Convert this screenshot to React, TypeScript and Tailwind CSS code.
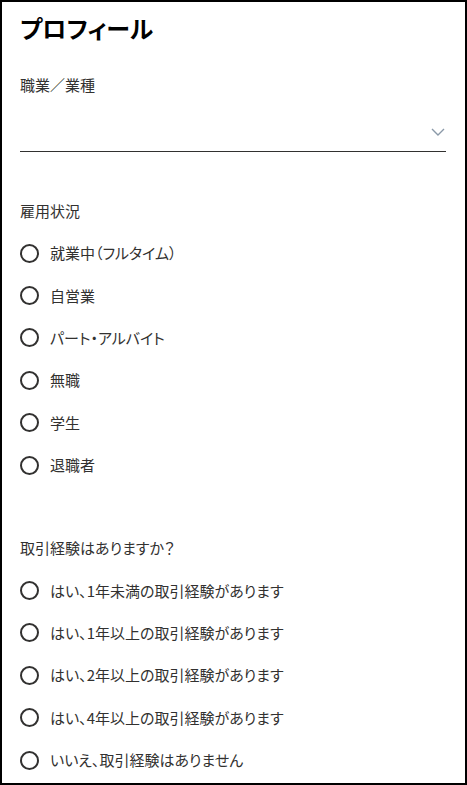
import React, { useState } from 'react';

const employment = ['就業中（フルタイム）', '自営業', 'パート・アルバイト', '無職', '学生', '退職者'];
const experience = [
  'はい、1年未満の取引経験があります',
  'はい、1年以上の取引経験があります',
  'はい、2年以上の取引経験があります',
  'はい、4年以上の取引経験があります',
  'いいえ、取引経験はありません',
];

function RadioGroup({ name, options }: { name: string; options: string[] }) {
  const [value, setValue] = useState<string | null>(null);
  return (
    <div className="flex flex-col">
      {options.map((opt) => (
        <label key={opt} className="h-[42.4px] flex items-center cursor-pointer" onClick={() => setValue(opt)}>
          <span className="w-[19px] h-[19px] rounded-full border-2 border-[#323130] flex items-center justify-center shrink-0">
            {value === opt && <span className="w-[9px] h-[9px] rounded-full bg-[#323130]" />}
          </span>
          <span className="ml-[11px] text-[15px] leading-[22px] text-[#323130]">{opt}</span>
          <input type="radio" name={name} className="hidden" readOnly checked={value === opt} />
        </label>
      ))}
    </div>
  );
}

export default function App() {
  return (
    <div
      className="w-[467px] h-[785px] border-2 border-black bg-white overflow-hidden [font-feature-settings:'palt'] text-[#323130]"
      style={{ fontFamily: '"Noto Sans CJK JP", "Noto Sans", sans-serif' }}
    >
      <div className="pl-[18px] pr-[19px] pt-[10px] flex flex-col">
        <h1 className="text-[24px] leading-[32px] font-bold text-black">プロフィール</h1>

        <p className="mt-[30px] text-[15px] leading-[22px]">職業／業種</p>
        <div className="mt-[16px] h-[40px] border-b border-[#323130] flex items-center justify-end pr-[1px]">
          <svg width="14" height="8" viewBox="0 0 14 8" fill="none">
            <path d="M1 1l6 6 6-6" stroke="#8a99a8" strokeWidth="1.4" />
          </svg>
        </div>

        <p className="mt-[48px] text-[15px] leading-[22px]">雇用状況</p>
        <div className="mt-[10px]">
          <RadioGroup name="employment" options={employment} />
        </div>

        <p className="mt-[51px] text-[15px] leading-[22px]">取引経験はありますか？</p>
        <div className="mt-[10px]">
          <RadioGroup name="experience" options={experience} />
        </div>
      </div>
    </div>
  );
}
